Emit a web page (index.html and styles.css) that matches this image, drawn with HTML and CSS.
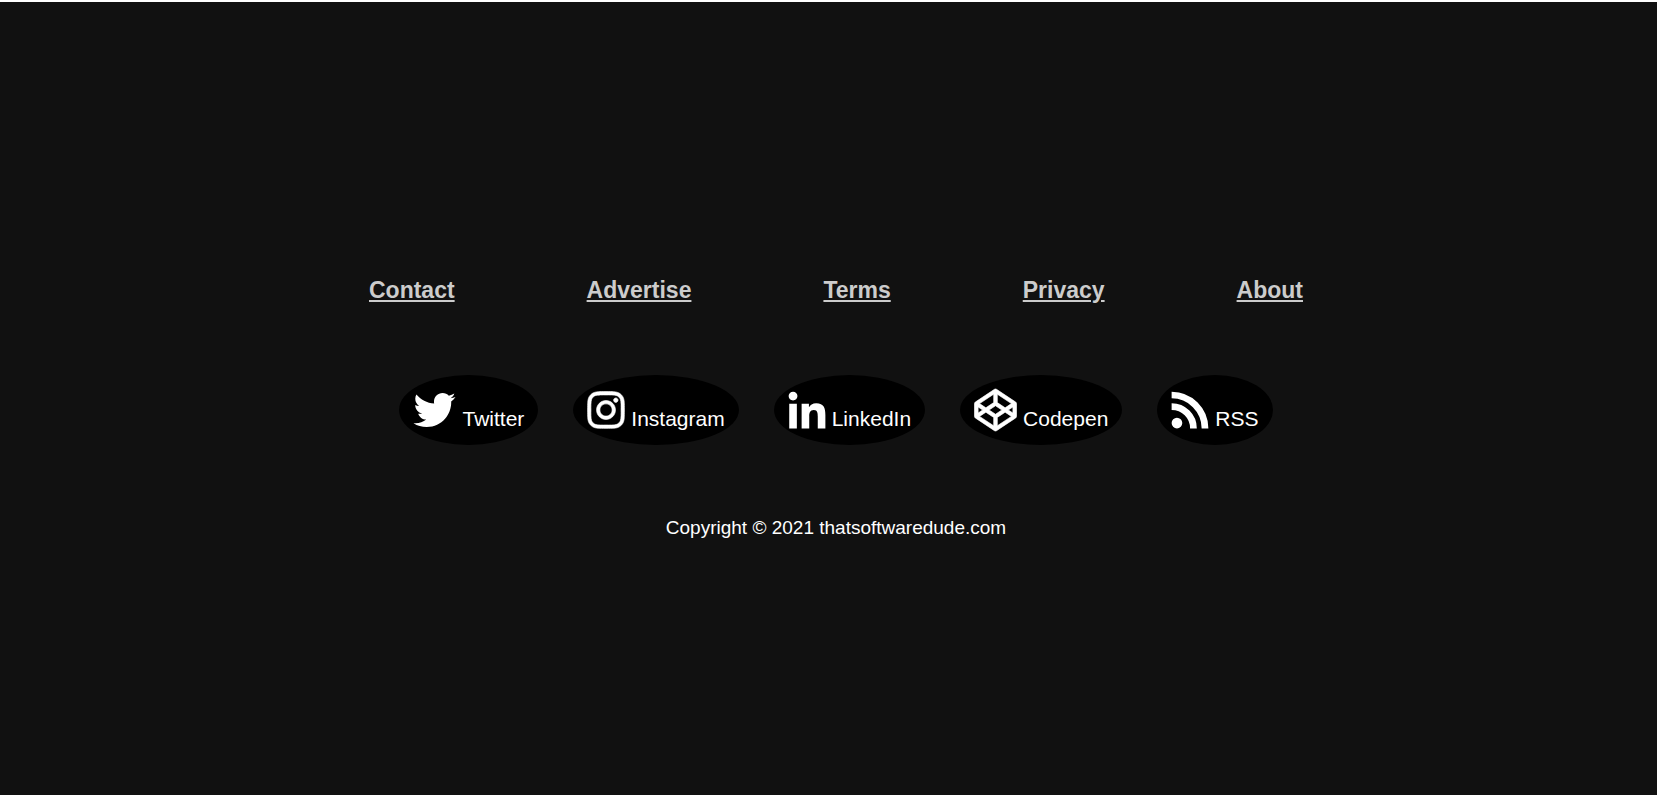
FILE: index.html
```html
<!DOCTYPE html>
<html lang="en">

<head>
    <meta charset="UTF-8">
    <meta name="viewport" content="width=device-width, initial-scale=1.0">
    <title>Footer</title>
    <link rel="stylesheet" href="styles.css">
</head>

<body>

    <footer class="footer">
        <nav class="footer-links">
            <a href="#">Contact</a>
            <a href="#">Advertise</a>
            <a href="#">Terms</a>
            <a href="#">Privacy</a>
            <a href="#">About</a>
        </nav>

        <div class="social">
            <a class="social-link" href="#">
                <svg class="icon" viewBox="0 0 512 512" aria-hidden="true">
                    <path d="M459.37 151.716c.325 4.548.325 9.097.325 13.645 0 138.72-105.583 298.558-298.558 298.558-59.452 0-114.68-17.219-161.137-47.106 8.447.974 16.568 1.299 25.34 1.299 49.055 0 94.213-16.568 130.274-44.832-46.132-.975-84.792-31.188-98.112-72.772 6.498.974 12.995 1.624 19.818 1.624 9.421 0 18.843-1.3 27.614-3.573-48.081-9.747-84.143-51.98-84.143-102.985v-1.299c13.969 7.797 30.214 12.67 47.431 13.319-28.264-18.843-46.781-51.005-46.781-87.391 0-19.492 5.197-37.36 14.294-52.954 51.655 63.675 129.3 105.258 216.365 109.807-1.624-7.797-2.599-15.918-2.599-24.04 0-57.828 46.782-104.934 104.934-104.934 30.213 0 57.502 12.67 76.67 33.137 23.715-4.548 46.456-13.32 66.599-25.34-7.798 24.366-24.366 44.833-46.132 57.827 21.117-2.273 41.584-8.122 60.426-16.243-14.292 20.791-32.161 39.308-52.628 54.253z"/>
                </svg>
                <span>Twitter</span>
            </a>
            <a class="social-link" href="#">
                <svg class="icon icon-narrow icon-bold" viewBox="0 0 448 512" aria-hidden="true">
                    <path d="M224.1 141c-63.6 0-114.9 51.3-114.9 114.9s51.3 114.9 114.9 114.9S339 319.5 339 255.9 287.7 141 224.1 141zm0 189.6c-41.1 0-74.7-33.5-74.7-74.7s33.5-74.7 74.7-74.7 74.7 33.5 74.7 74.7-33.6 74.7-74.7 74.7zm146.4-194.3c0 14.9-12 26.8-26.8 26.8-14.9 0-26.8-12-26.8-26.8s12-26.8 26.8-26.8 26.8 12 26.8 26.8zm76.1 27.2c-1.7-35.9-9.9-67.7-36.2-93.9-26.2-26.2-58-34.4-93.9-36.2-37-2.1-147.9-2.1-184.9 0-35.8 1.7-67.6 9.9-93.9 36.1s-34.4 58-36.2 93.9c-2.1 37-2.1 147.9 0 184.9 1.7 35.9 9.9 67.7 36.2 93.9s58 34.4 93.9 36.2c37 2.1 147.9 2.1 184.9 0 35.9-1.7 67.7-9.9 93.9-36.2 26.2-26.2 34.4-58 36.2-93.9 2.1-37 2.1-147.8 0-184.8zM398.8 388c-7.8 19.6-22.9 34.7-42.6 42.6-29.5 11.7-99.5 9-132.1 9s-102.7 2.6-132.1-9c-19.6-7.8-34.7-22.9-42.6-42.6-11.7-29.5-9-99.5-9-132.1s-2.6-102.7 9-132.1c7.8-19.6 22.9-34.7 42.6-42.6 29.5-11.7 99.5-9 132.1-9s102.7-2.6 132.1 9c19.6 7.8 34.7 22.9 42.6 42.6 11.7 29.5 9 99.5 9 132.1s2.7 102.7-9 132.1z"/>
                </svg>
                <span>Instagram</span>
            </a>
            <a class="social-link" href="#">
                <svg class="icon icon-narrow" viewBox="0 -32 448 512" aria-hidden="true">
                    <path d="M100.28 448H7.4V148.9h92.88zM53.79 108.1C24.09 108.1 0 83.5 0 53.8a53.79 53.79 0 0 1 107.58 0c0 29.7-24.1 54.3-53.79 54.3zM447.9 448h-92.68V302.4c0-34.7-.7-79.2-48.29-79.2-48.29 0-55.69 37.7-55.69 76.7V448h-92.78V148.9h89.08v40.8h1.3c12.4-23.5 42.69-48.3 87.88-48.3 94 0 111.28 61.9 111.28 142.3V448z"/>
                </svg>
                <span>LinkedIn</span>
            </a>
            <a class="social-link" href="#">
                <svg class="icon icon-bold" viewBox="0 0 512 512" aria-hidden="true">
                    <path d="M502.285 159.704l-234-156c-7.987-4.915-16.511-4.96-24.571 0l-234 156C3.714 163.703 0 170.847 0 177.989v155.999c0 7.143 3.714 14.286 9.715 18.286l234 156.022c7.987 4.915 16.511 4.96 24.571 0l234-156.022c6-3.999 9.715-11.143 9.715-18.286V177.989c-.001-7.142-3.715-14.286-9.716-18.285zM278 63.131l172.286 114.858-76.857 51.429L278 165.703V63.131zm-44 0v102.572l-95.429 63.715-76.857-51.429L234 63.131zM44 219.132l55.143 36.857L44 292.847v-73.715zm190 229.715L61.714 333.989l76.857-51.429L234 346.275v102.572zm22-140.858l-77.715-52 77.715-52 77.715 52-77.715 52zm22 140.858V346.275l95.429-63.715 76.857 51.429L278 448.847zm190-156l-55.143-36.857L468 219.132v73.715z"/>
                </svg>
                <span>Codepen</span>
            </a>
            <a class="social-link" href="#">
                <svg class="icon icon-narrow" viewBox="0 0 448 512" aria-hidden="true">
                    <circle cx="65" cy="415" r="65"/>
                    <path class="icon-wave" d="M0 214a266 266 0 0 1 266 266M0 73a407 407 0 0 1 407 407"/>
                </svg>
                <span>RSS</span>
            </a>
        </div>

        <p class="copyright">Copyright © 2021 thatsoftwaredude.com</p>
    </footer>

</body>

</html>
```
FILE: styles.css
```css
/* Basic Reset */
* {
    margin: 0;
    padding: 0;
    box-sizing: border-box;
}

body {
    background-color: #fff;
    font-family: "Liberation Sans", Arial, sans-serif;
    padding-top: 2px;
}

.footer {
    display: flex;
    flex-direction: column;
    align-items: center;
    justify-content: center;
    gap: 70px;
    min-height: calc(100vh - 2px);
    padding: 18px 0 0 15px;
    background-color: #111;
    color: #fff;
}

/* Page links */
.footer-links {
    display: flex;
    flex-wrap: wrap;
    justify-content: space-between;
    width: 100%;
    max-width: 934px;
}

.footer-links a {
    color: #ccc;
    font-size: 23px;
    font-weight: bold;
    line-height: 30px;
}

/* Social buttons */
.social {
    display: flex;
    flex-wrap: wrap;
    justify-content: center;
    gap: 35px;
}

.social-link {
    display: flex;
    align-items: flex-end;
    gap: 6px;
    padding: 14px;
    border-radius: 50%;
    background-color: #000;
    color: #fff;
    font-size: 21px;
    line-height: 24px;
    text-decoration: none;
}

.icon {
    width: 43px;
    height: 42px;
    fill: currentColor;
    overflow: visible;
}

.icon-narrow {
    width: 38px;
}

.icon-bold {
    stroke: currentColor;
    stroke-width: 8;
}

.icon-wave {
    fill: none;
    stroke: currentColor;
    stroke-width: 82;
}

.copyright {
    font-size: 19px;
    line-height: 26px;
}
```
